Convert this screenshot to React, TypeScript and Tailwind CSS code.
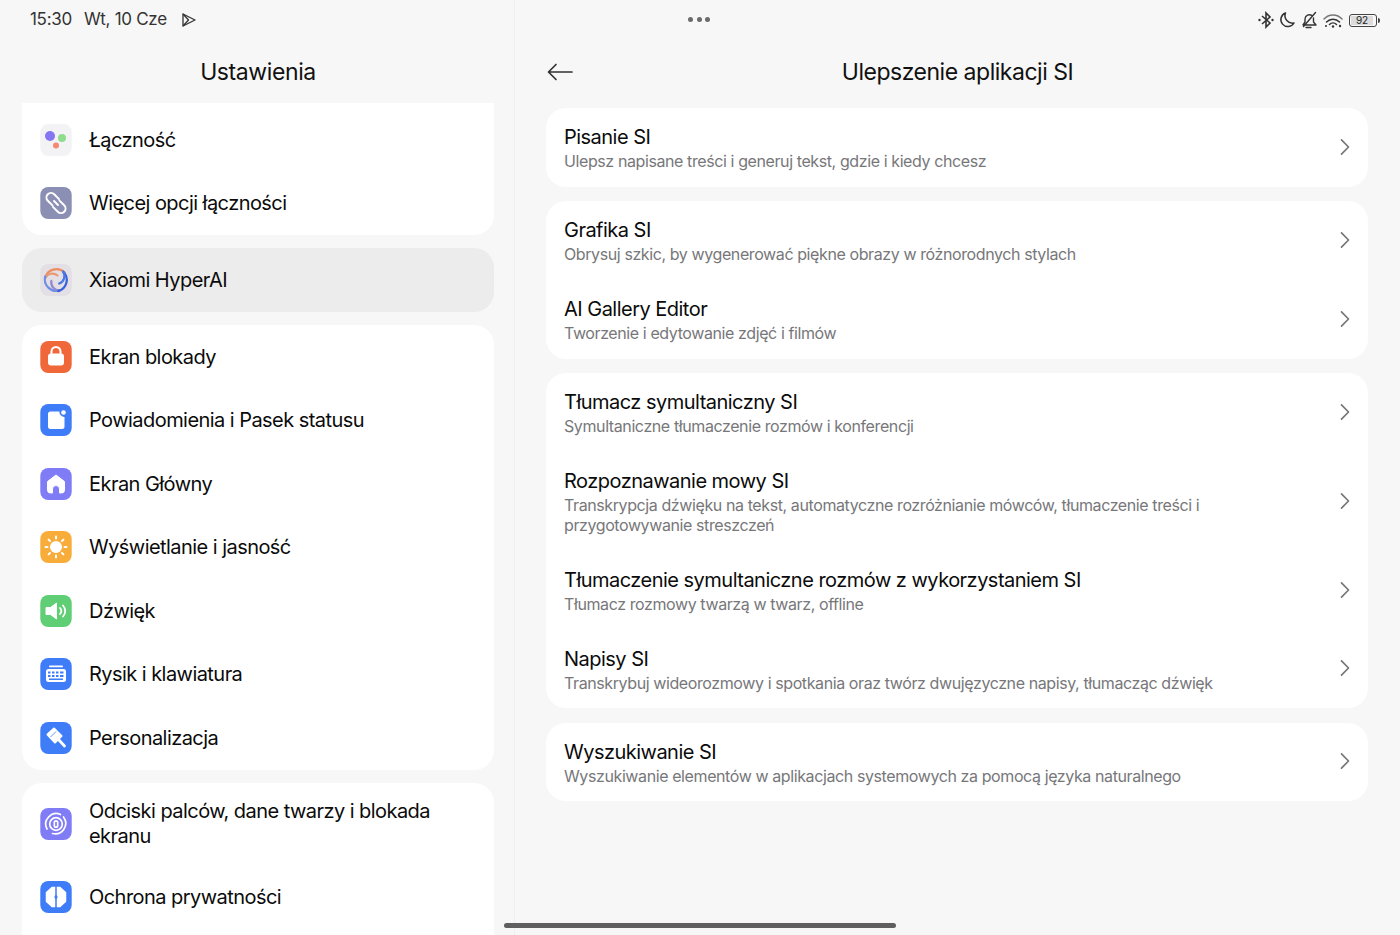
import React from "react";

const Tile = ({ bg, children }: { bg: string; children: React.ReactNode }) => (
  <svg width="32" height="32" viewBox="0 0 32 32" className="shrink-0">
    <rect x=".3" width="31.400" height="32" rx="8" fill={bg} />
    {children}
  </svg>
);

const Arm = ({ rot, outer, inner }: { rot: number; outer: string; inner: string }) => (
  <g transform={`rotate(${rot} 16 16)`}>
    <path d="M24.500 8.500A11.500 11.500 0 0 0 5.200 14" stroke={outer} />
    <path d="M5.200 14A8 8 0 0 1 17.500 11.500" stroke={inner} />
  </g>
);

const icons: Record<string, React.ReactNode> = {
  conn: (
    <Tile bg="#f3f3f5">
      <circle cx="10" cy="12" r="5" fill="#8577f2" />
      <circle cx="22" cy="14" r="4" fill="#8fdc8c" />
      <circle cx="16" cy="21.5" r="3" fill="#f58a70" />
    </Tile>
  ),
  link: (
    <Tile bg="#8b8fb3">
      <g fill="none" stroke="#fff" strokeWidth="2" strokeLinecap="round">
        <path d="M19 12.100 14.200 7.300A4.500 4.500 0 0 0 7.800 13.700L12.500 18.400" />
        <path d="M13 19.900 17.800 24.700A4.500 4.500 0 0 0 24.200 18.300L19.500 13.600" />
        <path d="M14 14l4 4" />
      </g>
    </Tile>
  ),
  ai: (
    <Tile bg="#e3dfe4">
      <g fill="none" strokeWidth="2.200" strokeLinecap="round">
        <Arm rot={0} outer="#ee8d5e" inner="#e89a74" />
        <Arm rot={240} outer="#6f8fe6" inner="#8f8ad0" />
        <Arm rot={120} outer="#3560de" inner="#4c78e4" />
      </g>
    </Tile>
  ),
  lock: (
    <Tile bg="#f0673a">
      <path d="M11.500 13v-2.500a4.500 4.500 0 0 1 9 0V13" fill="none" stroke="#fff" strokeWidth="2" />
      <rect x="8" y="12.500" width="16" height="12" rx="3" fill="#fff" />
    </Tile>
  ),
  notif: (
    <Tile bg="#3f7cf7">
      <path d="M10.500 7.500h8.800a6 6 0 0 0 5.200 5.500v9.500a2.500 2.500 0 0 1-2.500 2.500H10.500A2.500 2.500 0 0 1 8 22.500V10a2.500 2.500 0 0 1 2.500-2.500z" fill="#fff" />
      <circle cx="23.500" cy="8.500" r="2.300" fill="#fff" />
    </Tile>
  ),
  home: (
    <Tile bg="#7f7cf6">
      <path d="M16 7l8.500 6.500V22a3 3 0 0 1-3 3H19.500v-4a3.500 3.500 0 0 0-7 0v4h-2a3 3 0 0 1-3-3v-8.500z" fill="#fff" strokeLinejoin="round" stroke="#fff" strokeWidth="1" />
    </Tile>
  ),
  sun: (
    <Tile bg="#f8ac3a">
      <circle cx="16" cy="16" r="6" fill="#fff" />
      <g stroke="#fff" strokeWidth="2" strokeLinecap="round">
        <path d="M16 5.500v2M16 24.500v2M5.500 16h2M24.500 16h2M8.600 8.600l1.400 1.400M22 22l1.400 1.400M8.600 23.400l1.400-1.400M22 10l1.400-1.400" />
      </g>
    </Tile>
  ),
  sound: (
    <Tile bg="#5fce74">
      <path d="M6 12.500h4.500L16.500 8v16l-6-4.500H6z" fill="#fff" stroke="#fff" strokeLinejoin="round" />
      <path d="M20 13a4.500 4.500 0 0 1 0 6M23 10.500a8 8 0 0 1 0 11" fill="none" stroke="#fff" strokeWidth="1.800" strokeLinecap="round" />
    </Tile>
  ),
  keyboard: (
    <Tile bg="#3f7cf7">
      <rect x="9" y="7.500" width="14" height="1.800" rx=".9" fill="#fff" />
      <rect x="6" y="11" width="20" height="13" rx="2.500" fill="#fff" />
      <g fill="#3f7cf7">
        <rect x="8" y="13.500" width="2.500" height="2" /><rect x="12" y="13.500" width="2.500" height="2" /><rect x="16" y="13.500" width="2.500" height="2" /><rect x="20" y="13.500" width="3.500" height="2" />
        <rect x="8" y="17" width="2.500" height="2" /><rect x="12" y="17" width="2.500" height="2" /><rect x="16" y="17" width="2.500" height="2" /><rect x="20" y="17" width="3.500" height="2" />
        <rect x="9" y="20.500" width="14" height="1.500" />
      </g>
    </Tile>
  ),
  brush: (
    <Tile bg="#3f7cf7">
      <path d="M7.500 12.500 14 6.500 21.500 14 15 20.500z" fill="#fff" stroke="#fff" strokeWidth="2" strokeLinejoin="round" />
      <path d="M18.500 17.500l6 6.500" stroke="#fff" strokeWidth="2.800" strokeLinecap="round" />
      <path d="M10.500 15l5.500-5.500" stroke="#3f7cf7" strokeWidth=".8" />
    </Tile>
  ),
  finger: (
    <Tile bg="#7f7cf6">
      <g fill="none" stroke="#fff" strokeWidth="1.700" strokeLinecap="round">
        <path d="M7 21a10.500 10.500 0 0 1 13.500-14.500" />
        <path d="M23.500 9a10.500 10.500 0 0 1-11 16.500" />
        <circle cx="16" cy="16" r="6.300" />
        <rect x="14.300" y="12.800" width="3.400" height="6.400" rx="1.700" />
      </g>
    </Tile>
  ),
  shield: (
    <Tile bg="#3f7cf7">
      <path d="M12 6.500h8l5.500 5v9L20 25.500h-8l-5.500-5v-9z" fill="#fff" strokeLinejoin="round" stroke="#fff" strokeWidth="1.500" />
      <path d="M16 5v22" stroke="#3f7cf7" strokeWidth="1.500" />
      <path d="M16 13.500l1.800 2.500-1.800 2.500-1.800-2.500z" fill="#3f7cf7" />
    </Tile>
  ),
};

const Row = ({ icon, label }: { icon: string; label: string }) => (
  <div className="flex h-[63.5px] items-center gap-[17px] px-[18px]">
    {icons[icon]}
    <span>{label}</span>
  </div>
);

const Chevron = () => (
  <svg width="12" height="18" viewBox="0 0 12 18" className="mb-[1px] shrink-0" fill="none" stroke="#77777b" strokeWidth="1.700" strokeLinecap="round" strokeLinejoin="round">
    <path d="M2.500 1.800 9.500 9l-7 7.200" />
  </svg>
);

const Item = ({ title, sub }: { title: string; sub: string }) => (
  <div className="flex items-center justify-between pb-[15.250px] pl-[18px] pr-[17px] pt-[15px]">
    <div className="w-[700px] grow">
      <div className="text-[20px] leading-[28px] tracking-[-0.52px] text-[#0b0b0b]">{title}</div>
      <div className="max-w-[680px] text-[16px] leading-[20.500px] tracking-[-0.4px] text-[#77777a]">{sub}</div>
    </div>
    <Chevron />
  </div>
);

const StatusIcons = () => (
  <div className="flex items-center gap-[4px]">
    <svg width="16" height="18" viewBox="0 0 16 18" fill="none" stroke="#333" strokeWidth="1.600">
      <path d="M4 5l8 7-4 4V2l4 4-8 7" />
      <circle cx="1.500" cy="9" r="1.200" fill="#333" stroke="none" />
      <circle cx="14.500" cy="9" r="1.200" fill="#333" stroke="none" />
    </svg>
    <svg width="18" height="18" viewBox="0 0 18 18" fill="none" stroke="#333" strokeWidth="1.500">
      <path d="M7.500 2a7 7 0 1 0 8.500 10A7.500 7.500 0 0 1 7.500 2z" strokeLinejoin="round" />
    </svg>
    <svg width="18" height="18" viewBox="0 0 18 18" fill="none" stroke="#333" strokeWidth="1.400" strokeLinecap="round" strokeLinejoin="round">
      <path d="M5 8a4.500 4.500 0 0 1 7-3.500M13.500 7v4l2.500 3H4M5 8v3l-2 3M6 16.500h5M15.500 1.500l-12 14" />
    </svg>
    <svg width="22" height="18" viewBox="0 0 20 18" fill="none" stroke="#333" strokeLinecap="round">
      <path d="M1 8a12 12 0 0 1 18 0" strokeWidth="1.500" stroke="#777" />
      <path d="M3.500 11a9 9 0 0 1 13 0" strokeWidth="1.500" />
      <path d="M6.500 13.500a5 5 0 0 1 7 0" strokeWidth="1.500" />
      <circle cx="10" cy="15.500" r="1.200" fill="#333" stroke="none" />
      <circle cx="3" cy="15" r="1" fill="#333" stroke="none" />
      <circle cx="17" cy="15" r="1.200" fill="#333" stroke="none" />
    </svg>
    <div className="ml-[1px] flex items-center">
      <div className="flex h-[13px] w-[28px] items-center rounded-[3px] border border-[#444] p-[1px]">
        <div className="flex h-full w-[92%] items-center justify-center bg-[#dcdcdc] text-[10px] leading-none tracking-normal text-[#222]">92</div>
      </div>
      <div className="ml-[1px] h-[5px] w-[2px] rounded-r-sm bg-[#444]" />
    </div>
  </div>
);

export default function App() {
  return (
    <div className="relative flex h-[935px] w-[1400px] overflow-hidden bg-[#f7f7f7] font-['Inter','Noto_Sans',sans-serif] text-[20px] tracking-[-0.55px] text-[#0b0b0b]">
      <div className="flex h-[935px] w-[515px] shrink-0 flex-col overflow-hidden border-r border-[#efefef]">
        <div className="flex h-[40px] shrink-0 items-center gap-[12px] pl-[30px] text-[17px] tracking-[-0.3px] text-[#333]">
          <span>15:30</span>
          <span>Wt, 10 Cze</span>
          <svg width="16" height="16" viewBox="0 0 16 16" fill="none" stroke="#333" strokeWidth="1.300" strokeLinejoin="round" className="ml-[2px]">
            <path d="M2 2 14 8 2 14z" />
            <path d="M2 2 7.500 8 2 14" />
          </svg>
        </div>
        <div className="flex h-[63px] shrink-0 items-center justify-center pl-[2px] pt-[1px] text-[23px] tracking-[-0.4px] text-[#111]">Ustawienia</div>
        <div className="flex shrink-0 flex-col gap-[13.250px] pl-[22px] pr-[20px]">
          <div className="rounded-b-[20px] bg-white pt-[5px]">
            <Row icon="conn" label="Łączność" />
            <Row icon="link" label="Więcej opcji łączności" />
          </div>
          <div className="rounded-[20px] bg-[#ececec]">
            <Row icon="ai" label="Xiaomi HyperAI" />
          </div>
          <div className="rounded-[20px] bg-white">
            <Row icon="lock" label="Ekran blokady" />
            <Row icon="notif" label="Powiadomienia i Pasek statusu" />
            <Row icon="home" label="Ekran Główny" />
            <Row icon="sun" label="Wyświetlanie i jasność" />
            <Row icon="sound" label="Dźwięk" />
            <Row icon="keyboard" label="Rysik i klawiatura" />
            <Row icon="brush" label="Personalizacja" />
          </div>
          <div className="h-[200px] rounded-[20px] bg-white">
            <div className="flex h-[82px] items-center gap-[17px] px-[18px]">
              {icons.finger}
              <span className="leading-[25px]">Odciski palców, dane twarzy i blokada ekranu</span>
            </div>
            <Row icon="shield" label="Ochrona prywatności" />
          </div>
        </div>
      </div>

      <div className="flex min-w-0 grow flex-col">
        <div className="flex h-[40px] shrink-0 items-center justify-end pr-[20px]">
          <StatusIcons />
        </div>
        <div className="flex h-[63px] shrink-0 items-center px-[32px]">
          <svg width="26" height="18" viewBox="0 0 26 18" fill="none" stroke="#333" strokeWidth="1.700" strokeLinecap="round" strokeLinejoin="round" className="shrink-0">
            <path d="M25 9H1.500M9 1.500 1.500 9 9 16.500" />
          </svg>
          <div className="grow pr-[26px] pt-[1px] text-center text-[23px] tracking-[-0.48px] text-[#111]">Ulepszenie aplikacji SI</div>
        </div>
        <div className="flex flex-col gap-[14.250px] pl-[31px] pr-[32px] pt-[5px]">
          <div className="rounded-[20px] bg-white">
            <Item title="Pisanie SI" sub="Ulepsz napisane treści i generuj tekst, gdzie i kiedy chcesz" />
          </div>
          <div className="rounded-[20px] bg-white">
            <Item title="Grafika SI" sub="Obrysuj szkic, by wygenerować piękne obrazy w różnorodnych stylach" />
            <Item title="AI Gallery Editor" sub="Tworzenie i edytowanie zdjęć i filmów" />
          </div>
          <div className="rounded-[20px] bg-white">
            <Item title="Tłumacz symultaniczny SI" sub="Symultaniczne tłumaczenie rozmów i konferencji" />
            <Item title="Rozpoznawanie mowy SI" sub="Transkrypcja dźwięku na tekst, automatyczne rozróżnianie mówców, tłumaczenie treści i przygotowywanie streszczeń" />
            <Item title="Tłumaczenie symultaniczne rozmów z wykorzystaniem SI" sub="Tłumacz rozmowy twarzą w twarz, offline" />
            <Item title="Napisy SI" sub="Transkrybuj wideorozmowy i spotkania oraz twórz dwujęzyczne napisy, tłumacząc dźwięk" />
          </div>
          <div className="rounded-[20px] bg-white">
            <Item title="Wyszukiwanie SI" sub="Wyszukiwanie elementów w aplikacjach systemowych za pomocą języka naturalnego" />
          </div>
        </div>
      </div>

      <div className="absolute left-[688px] top-[17px] flex gap-[3.500px]">
        <div className="h-[5px] w-[5px] rounded-full bg-[#6b6b6b]" />
        <div className="h-[5px] w-[5px] rounded-full bg-[#6b6b6b]" />
        <div className="h-[5px] w-[5px] rounded-full bg-[#6b6b6b]" />
      </div>
      <div className="absolute left-[504px] top-[923px] h-[5px] w-[392px] rounded-full bg-[#5f5f5f]" />
    </div>
  );
}
